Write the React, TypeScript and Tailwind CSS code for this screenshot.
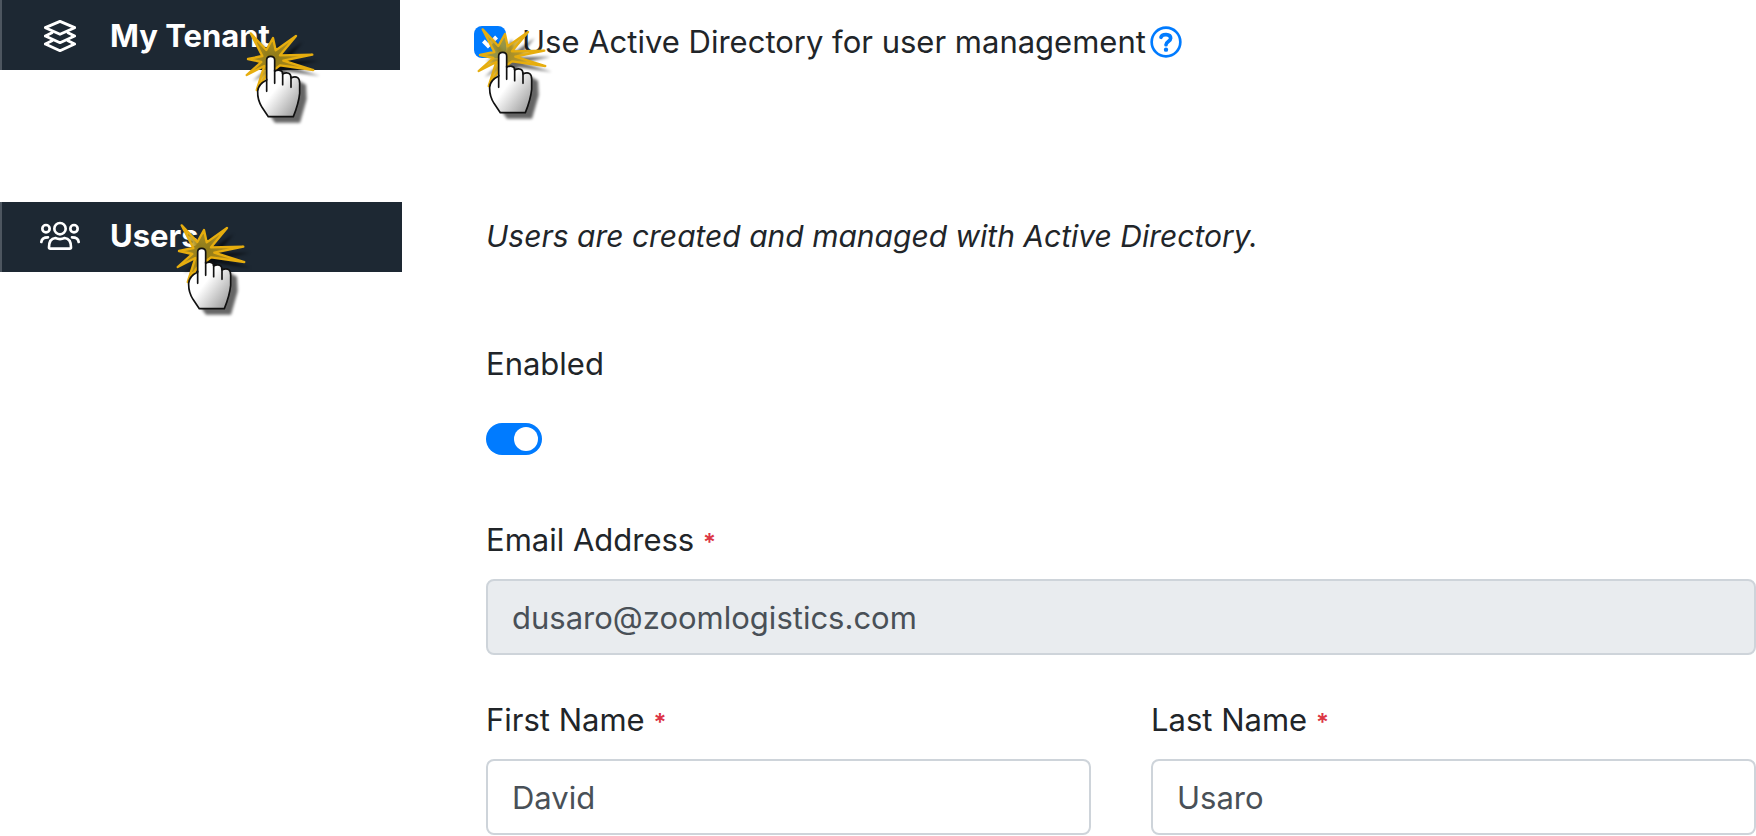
import { ReactNode } from "react";

const LayersIcon = () => (
  <svg viewBox="0 0 96 96" className="h-8 w-8" fill="none" stroke="currentColor" strokeWidth="8.5" strokeLinejoin="round" strokeLinecap="round" aria-hidden="true">
    <path d="M48 4 92 23 48 43 4 23Z" />
    <path d="M24 38 4 48 48 68 92 48 72 38" />
    <path d="M24 62 4 72 48 92 92 72 72 62" />
  </svg>
);

const UsersIcon = () => (
  <svg viewBox="0 0 120 96" className="h-8 w-10" fill="none" stroke="currentColor" strokeWidth="8" strokeLinejoin="round" strokeLinecap="round" aria-hidden="true">
    <circle cx="60" cy="26" r="17" />
    <circle cx="18" cy="26" r="11" />
    <circle cx="102" cy="26" r="11" />
    <path d="M27 82C27 64 34 55 46 54C55 58 65 58 74 54C86 55 93 64 93 82Q93 86 89 86H31Q27 86 27 82Z" />
    <path d="M4 66C5 56 11 52 24 52" />
    <path d="M116 66C115 56 109 52 96 52" />
  </svg>
);

const HelpIcon = () => (
  <svg viewBox="0 0 96 96" className="h-8 w-8" fill="none" stroke="currentColor" strokeLinecap="round" aria-hidden="true">
    <circle cx="48" cy="48" r="43" strokeWidth="8" />
    <path d="M33 34C36 23 62 22 62 37C62 46 48 47 48 56" strokeWidth="11" />
    <circle cx="48" cy="71" r="6.5" fill="currentColor" stroke="none" />
  </svg>
);

// Hand pointer with the click burst behind its fingertip
const ClickPointer = ({ id, className }: { id: string; className: string }) => (
  <svg viewBox="0 0 300 330" className={`pointer-events-none absolute z-10 h-[110px] w-[100px] ${className}`} aria-hidden="true">
    <defs>
      <linearGradient id={`${id}-fill`} x1="0.3" y1="0.35" x2="0.9" y2="1">
        <stop offset="0.25" stopColor="#ffffff" />
        <stop offset="1" stopColor="#999999" />
      </linearGradient>
      <radialGradient id={`${id}-burst`} gradientUnits="userSpaceOnUse" cx="125" cy="112" r="75">
        <stop offset="0.2" stopColor="#b3971a" />
        <stop offset="1" stopColor="#dcaa18" />
      </radialGradient>
      <filter id={`${id}-blur`} x="-20%" y="-20%" width="150%" height="150%">
        <feGaussianBlur stdDeviation="5" />
      </filter>
    </defs>
    <g filter={`url(#${id}-blur)`} opacity="0.6" transform="translate(20 18)">
      <path d="M60 40 109 90 129 52 137 91 198 48 150 106 247 104 160 122 250 150 150 136 80 210 103 138 48 165 94 126 52 116 97 108Z" />
      <path d="M110 215V120Q122 96 134 120V152L158 156 182 162 208 176 210 220 190 290H115L88 252 82 208Z" />
    </g>
    <path
      d="M62 40 109 90 129 54 137 91 198 48 150 106 247 104 160 122 250 150 150 136 108 168 80 210 103 138 50 165 94 126 54 117 97 108Z"
      fill={`url(#${id}-burst)`} fillOpacity="0.8" stroke="#e6ad0e" strokeWidth="7" strokeLinejoin="round"
    />
    <path
      d="M110 180V120Q110 109 122 109 134 109 134 120V154Q140 150 149 151 158 152 158 162 168 157 176 160 183 163 183 174 195 168 203 173 209 177 209 190V220Q206 250 190 290H115L96 262Q82 240 83 214 84 193 110 180Z"
      fill={`url(#${id}-fill)`} stroke="#111111" strokeWidth="5" strokeLinejoin="round"
    />
    <path d="M110 178V214M134 150V190M158 160V194M183 172V202" stroke="#111111" strokeWidth="5" fill="none" strokeLinecap="round" />
  </svg>
);

const NavLink = ({ icon, label, className, children }: { icon: ReactNode; label: string; className: string; children: ReactNode }) => (
  <a href="#" className={`relative flex h-[70px] items-center border-l-2 border-[#4d5660] bg-[#1d2833] text-white ${className}`}>
    <span className="flex w-[116px] justify-center">{icon}</span>
    <span className="-ml-2 text-[31px] leading-[48px] font-bold">{label}</span>
    {children}
  </a>
);

const Field = ({ id, label, value, disabled }: { id: string; label: string; value: string; disabled?: boolean }) => (
  <div className="flex min-w-0 flex-1 flex-col gap-[15px]">
    <label htmlFor={id} className="text-[31px] leading-[48px]">
      {label} <span className="text-[24px] leading-none font-semibold text-[#dc3545]">*</span>
    </label>
    <input
      id={id}
      type="text"
      defaultValue={value}
      disabled={disabled}
      className="h-[76px] w-full rounded-lg border-2 border-[#ced4da] bg-white px-6 text-[31px] text-[#495057] disabled:bg-[#e9ecef]"
    />
  </div>
);

const App = () => {
  return (
    <div className="flex items-start bg-white font-['Inter',sans-serif] text-[#212529]">
      <nav className="flex w-[402px] shrink-0 flex-col items-start gap-[132px]">
        <NavLink icon={<LayersIcon />} label="My Tenant" className="w-[400px] pt-[2px]">
          <ClickPointer id="tenant" className="top-5 left-[228px]" />
        </NavLink>
        <NavLink icon={<UsersIcon />} label="Users" className="w-full pb-[2px]">
          <ClickPointer id="users" className="top-[10px] left-[159px]" />
        </NavLink>
      </nav>

      <main className="min-w-0 flex-1 pt-[18px] pl-[72px]">
        <div className="relative flex items-center">
          <span className="relative mr-4 flex h-8 w-8">
            <input id="ad" type="checkbox" defaultChecked className="h-8 w-8 appearance-none rounded-lg bg-[#007bff]" />
            <svg viewBox="0 0 8 8" className="pointer-events-none absolute inset-2 h-4 w-4" aria-hidden="true">
              <path fill="#fff" d="M6.564.75l-3.59 3.612-1.538-1.55L0 4.26l2.974 2.99L8 2.193z" />
            </svg>
          </span>
          <label htmlFor="ad" className="text-[31px] leading-[48px]">
            Use Active Directory for user management
          </label>
          <button type="button" aria-label="Help" className="ml-1 text-[#007bff]">
            <HelpIcon />
          </button>
          <ClickPointer id="directory" className="top-[-2px] left-[-12px]" />
        </div>

        <form className="flex flex-col pt-[146px] pl-3">
          <p className="text-[30px] leading-[48px] italic">Users are created and managed with Active Directory.</p>

          <label htmlFor="enabled" className="mt-20 text-[31px] leading-[48px]">
            Enabled
          </label>
          <input
            id="enabled"
            type="checkbox"
            role="switch"
            defaultChecked
            className="mt-[35px] flex h-8 w-14 appearance-none items-center rounded-full bg-[#007bff] px-1 before:h-6 before:w-6 before:rounded-full before:bg-white checked:justify-end"
          />

          <div className="mt-[61px] flex">
            <Field id="email" label="Email Address" value="dusaro@zoomlogistics.com" disabled />
          </div>
          <div className="mt-[41px] flex gap-[60px]">
            <Field id="first" label="First Name" value="David" />
            <Field id="last" label="Last Name" value="Usaro" />
          </div>
        </form>
      </main>
    </div>
  );
};

export default App;
